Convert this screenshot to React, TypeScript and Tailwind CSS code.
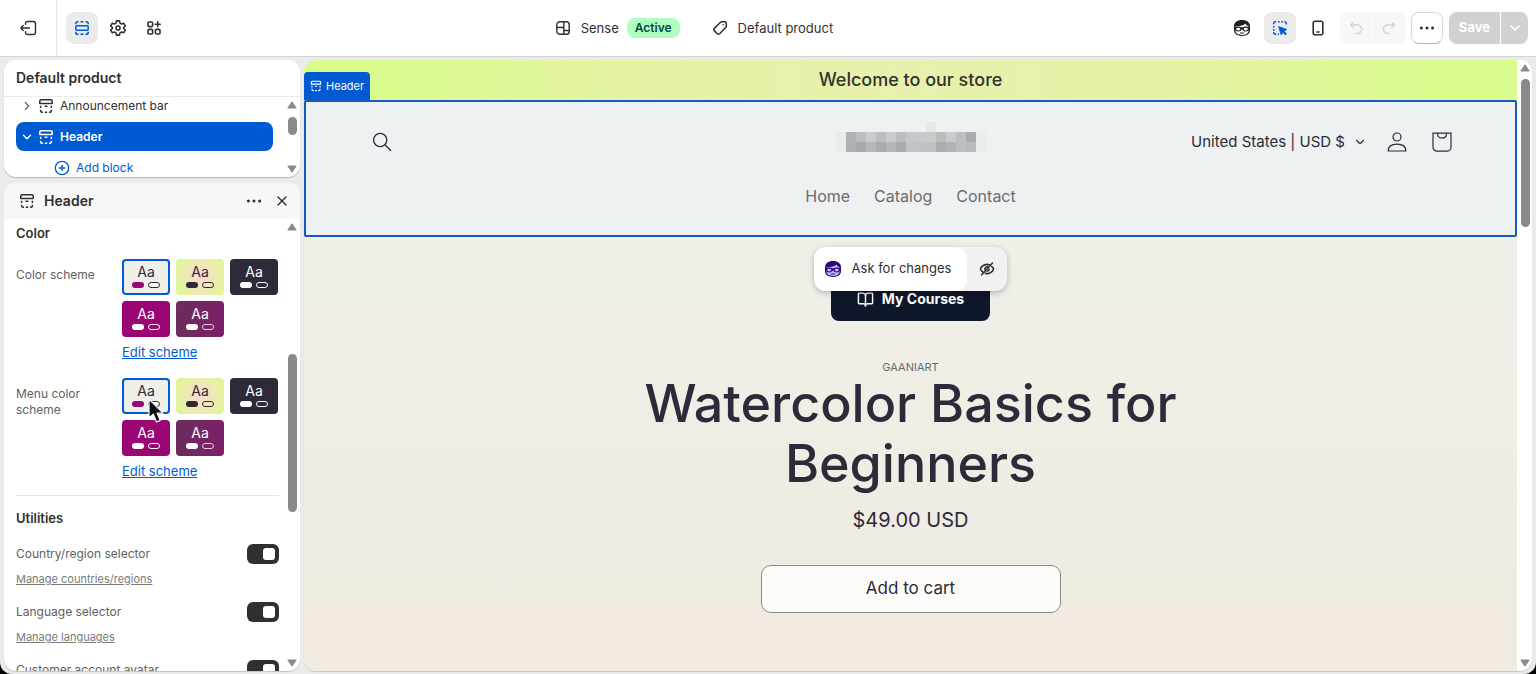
import { useState } from 'react';
import type { ReactNode } from 'react';
import { clsx } from 'clsx';
import { BookOpen, ChevronDown, ChevronRight, CirclePlus, X } from 'lucide-react';

type Scheme = { name: string; card: string; text: string; solid: string; outline: string };

const schemes: Scheme[] = [
  { name: 'Scheme 1', card: 'bg-[#f0efe9]', text: 'text-[#2e2a39]', solid: 'bg-[#9a0674]', outline: 'border-[#2e2a39] bg-white' },
  { name: 'Scheme 2', card: 'bg-[radial-gradient(circle,#fbdccf_10%,#e4f3a0_75%,#dcf58f)]', text: 'text-[#2e2a39]', solid: 'bg-[#2e2a39]', outline: 'border-[#2e2a39]' },
  { name: 'Scheme 3', card: 'bg-[#2e2a39]', text: 'text-white', solid: 'bg-white', outline: 'border-white' },
  { name: 'Scheme 4', card: 'bg-[#9a0674]', text: 'text-white', solid: 'bg-white', outline: 'border-white' },
  { name: 'Scheme 5', card: 'bg-linear-to-r from-[#6b2c5c] to-[#7d1f69]', text: 'text-white', solid: 'bg-white', outline: 'border-[#f0c8e6]' },
];

const logoRows = [
  ['', '', '', '', '', '', '', '', '', '#e3e8e9', '', '', '', '', ''],
  ['#e8ecec', '#aeb2b5', '#b9bec1', '#c8cccd', '#b9bec0', '#c8cccd', '#bac0c2', '#c5c8cb', '#c5c9cb', '#c7cbcc', '#b7bcbd', '#c9ccd4', '#babfc2', '#a7acad', '#e8ecec'],
  ['#e8ecec', '#adb1b5', '#a8a9ad', '#b4b6b9', '#a9abaf', '#b4b6b9', '#a9abaf', '#c2c3c7', '#c1c2c9', '#bfc0c4', '#abadb1', '#b1b3b7', '#bcbec4', '#b7bbbc', '#e8ecec'],
];

function SectionIcon({ className }: { className?: string }) {
  return (
    <svg viewBox="0 0 16 16" className={className} fill="none" stroke="currentColor" strokeWidth="1.5" strokeLinejoin="round" aria-hidden="true">
      <path d="M1.800 5.500V3.100c0-.8.600-1.400 1.400-1.400h9.600c.8 0 1.400.6 1.400 1.400v2.400z" />
      <path d="M2.600 7.800v2.200M13.400 7.800v2.200M2.600 11.800v.9c0 .9.600 1.500 1.500 1.500h.9M13.400 11.800v.9c0 .9-.6 1.500-1.500 1.500h-.9M6.800 14.200h2.400M6.600 8.300h2.800" />
    </svg>
  );
}

function ExitIcon() {
  return (
    <svg viewBox="0 0 18 18" className="size-[18px]" fill="none" stroke="currentColor" strokeWidth="1.4" strokeLinecap="round" strokeLinejoin="round" aria-hidden="true">
      <path d="M6.500 5.300V4.500c0-1.100.9-2 2-2h5.700c1.300 0 2.300 1 2.300 2.300v8.400c0 1.300-1 2.300-2.300 2.300H8.500c-1.100 0-2-.9-2-2v-.8M10.500 9H1.800M4.200 6.600 1.800 9l2.400 2.400" />
    </svg>
  );
}

function SectionsIcon() {
  return (
    <svg viewBox="0 0 16 16" className="size-4" fill="none" stroke="currentColor" strokeWidth="1.5" strokeLinejoin="round" aria-hidden="true">
      <rect x="1.8" y="5.8" width="12.4" height="4.4" rx="1" />
      <path d="M1.800 4.200v-.6c0-1.100.8-1.900 1.900-1.900h.8M6.500 1.700h3M11.500 1.700h.8c1.100 0 1.900.8 1.900 1.900v.6M1.800 11.800v.6c0 1.100.8 1.900 1.900 1.900h.8M6.500 14.300h3M11.500 14.300h.8c1.100 0 1.900-.8 1.900-1.900v-.6" />
    </svg>
  );
}

function GearIcon() {
  return (
    <svg viewBox="0 0 24 24" className="size-[18px]" fill="none" stroke="currentColor" strokeWidth="2.1" strokeLinejoin="round" aria-hidden="true">
      <path d="M10 2.500h4l.7 3 2.100 1.200 3-.9 2 3.400-2.300 2.100v1.400l2.300 2.100-2 3.400-3-.9-2.100 1.200-.7 3h-4l-.7-3-2.100-1.200-3 .9-2-3.400 2.300-2.100v-1.400L2.200 9.200l2-3.400 3 .9 2.100-1.200z" />
      <circle cx="12" cy="12" r="2.7" />
    </svg>
  );
}

function AppsIcon() {
  return (
    <svg viewBox="0 0 16 16" className="size-4" fill="none" stroke="currentColor" strokeWidth="1.6" strokeLinecap="round" aria-hidden="true">
      <rect x="2" y="2" width="4.6" height="4.6" rx="1" />
      <rect x="2" y="9.4" width="4.6" height="4.6" rx="1" />
      <rect x="9.4" y="9.4" width="4.6" height="4.6" rx="1" />
      <path d="M11.700 1.800v5M9.200 4.300h5" />
    </svg>
  );
}

function ThemeIcon() {
  return (
    <svg viewBox="0 0 16 16" className="size-4" fill="none" stroke="currentColor" strokeWidth="1.4" aria-hidden="true">
      <rect x="1.8" y="1.8" width="12.4" height="12.4" rx="2.8" />
      <path d="M8.800 2v12M2 7.500h6.800M8.800 10.500H14" />
    </svg>
  );
}

function TagIcon() {
  return (
    <svg viewBox="0 0 16 16" className="size-4" fill="none" stroke="currentColor" strokeWidth="1.5" strokeLinejoin="round" aria-hidden="true">
      <path d="M8.500 2.300a2 2 0 0 1 1.400-.6h2.500c1 0 1.900.8 1.900 1.900v2.500c0 .5-.2 1-.6 1.400l-5.800 6a2 2 0 0 1-2.800 0l-2.600-2.600a2 2 0 0 1 0-2.800z" />
      <circle cx="11.2" cy="4.8" r=".8" fill="currentColor" stroke="none" />
    </svg>
  );
}

function SidekickIcon({ className, face, hair }: { className?: string; face: string; hair: string }) {
  return (
    <svg viewBox="0 0 18 18" className={className} aria-hidden="true">
      <path d="M1 7.500C1 3.500 4 1 9 1s8 2.500 8 6.500v3.300C17 15 14 17 9 17s-8-2-8-6.200z" fill={hair} />
      <path d="M2.400 7.200c4 .3 7.900-.6 10.200-2.600.5 1.300 1.500 2.200 3 2.600v4c0 3-2.500 4.700-6.600 4.700s-6.600-1.700-6.600-4.700z" fill={face} />
      <path d="M1.500 8.200c2.300-.9 5-.8 7.500.2 2.500-1 5.200-1.100 7.500-.2-.1 2.900-1.400 4.300-3.700 4.300-1.900 0-2.900-.9-3.800-2.200-.9 1.300-1.900 2.200-3.800 2.200-2.300 0-3.600-1.400-3.700-4.300z" fill={hair} />
      <ellipse cx="5.2" cy="10.1" rx="2.1" ry="1.3" fill={face} />
      <ellipse cx="12.8" cy="10.1" rx="2.1" ry="1.3" fill={face} />
      <path d="M7.500 14h3" stroke={hair} strokeWidth="1.2" strokeLinecap="round" />
    </svg>
  );
}

function InspectorIcon() {
  return (
    <svg viewBox="0 0 16 16" className="size-4" fill="none" stroke="currentColor" strokeWidth="1.5" aria-hidden="true">
      <path d="M1.700 4.200v-.6c0-1.100.8-1.900 1.900-1.900h.6M6 1.700h1.700M9.300 1.700H11M12.400 1.700c1.100 0 1.900.8 1.900 1.900v.8M1.700 5.900v1.700M1.700 9.200v1.700M1.700 12.300c0 1.100.8 1.900 1.900 1.900h.8M5.800 14.200H7" />
      <path d="M6.600 6.600 15 9.500l-3.100 1.600 2.600 2.700-1.100 1.100-2.600-2.600L9.200 15z" fill="currentColor" strokeWidth=".8" strokeLinejoin="round" />
    </svg>
  );
}

function PhoneIcon() {
  return (
    <svg viewBox="0 0 16 16" className="size-4" fill="none" stroke="currentColor" strokeWidth="1.6" strokeLinecap="round" aria-hidden="true">
      <rect x="3.2" y="1.3" width="9.6" height="13.4" rx="2" />
      <path d="M7 12h2" />
    </svg>
  );
}

function TurnIcon({ flip }: { flip?: boolean }) {
  return (
    <svg viewBox="0 0 16 16" className={clsx('size-4', flip && '-scale-x-100')} fill="none" stroke="currentColor" strokeWidth="1.5" strokeLinecap="round" strokeLinejoin="round" aria-hidden="true">
      <path d="M5 2.500 2.500 5 5 7.500M2.800 5h6.700a4.200 4.200 0 0 1 0 8.400H8" />
    </svg>
  );
}

function DotsIcon() {
  return (
    <svg viewBox="0 0 16 16" className="size-4" fill="currentColor" aria-hidden="true">
      <circle cx="2.4" cy="8" r="1.5" />
      <circle cx="8" cy="8" r="1.5" />
      <circle cx="13.6" cy="8" r="1.5" />
    </svg>
  );
}

function EyeOffIcon() {
  return (
    <svg viewBox="0 0 16 16" className="size-4" fill="none" stroke="currentColor" strokeWidth="1.6" strokeLinecap="round" strokeLinejoin="round" aria-hidden="true">
      <path d="M13.500 2 2.700 13.800M4 11.200C2.400 10 1.500 8.700 1.500 8c0-1.400 2.700-4.600 6.500-4.600 1 0 1.900.2 2.700.5M12.800 5.600c1.100.9 1.700 1.900 1.700 2.400 0 1.400-2.700 4.600-6.500 4.600-.6 0-1.100-.1-1.600-.2M5.800 8.300A2.300 2.300 0 0 1 8.300 5.800M10.200 8.200a2.300 2.300 0 0 1-2 2" />
    </svg>
  );
}

function Pointer({ className }: { className?: string }) {
  return (
    <svg viewBox="0 0 16 26" className={clsx('h-[26px] w-4', className)} aria-hidden="true">
      <path d="M1 1v19l4.300-3.900L8.500 24l3.800-1.600-3.200-7.300H15z" fill="#111" stroke="#fff" strokeWidth="1.2" strokeLinejoin="round" />
    </svg>
  );
}

function Scrollbar({ thumb, className }: { thumb: string; className?: string }) {
  return (
    <div className={clsx('flex w-3 shrink-0 flex-col items-center text-[#8a8a8a]', className)} aria-hidden="true">
      <svg viewBox="0 0 10 8" className="h-2 w-[10px]">
        <path d="M5 .8 9.200 7H.8z" fill="currentColor" stroke="currentColor" strokeLinejoin="round" />
      </svg>
      <div className="flex w-full flex-1 flex-col items-center">
        <div className={clsx('w-[9px] rounded-full bg-[#8a8a8a]', thumb)} />
      </div>
      <svg viewBox="0 0 10 8" className="h-2 w-[10px]">
        <path d="M5 7.200 9.200 1H.8z" fill="currentColor" stroke="currentColor" strokeLinejoin="round" />
      </svg>
    </div>
  );
}

function IconButton({ label, active, className, children }: { label: string; active?: boolean; className?: string; children: ReactNode }) {
  return (
    <button
      type="button"
      aria-label={label}
      className={clsx('flex size-8 items-center justify-center rounded-lg', active ? 'bg-[#ebebeb] text-[#005bd3]' : 'text-[#303030]', className)}
    >
      {children}
    </button>
  );
}

function TopBar() {
  return (
    <header className="flex h-[57px] shrink-0 items-center justify-between border-b border-[#d4d4d4] bg-white">
      <div className="flex h-full items-center">
        <div className="flex h-full w-[57px] items-center justify-center border-r border-[#e6e6e6]">
          <IconButton label="Exit"><ExitIcon /></IconButton>
        </div>
        <div className="flex gap-1 pl-[9px]">
          <IconButton label="Sections" active><SectionsIcon /></IconButton>
          <IconButton label="Theme settings"><GearIcon /></IconButton>
          <IconButton label="App embeds"><AppsIcon /></IconButton>
        </div>
      </div>
      <div className="flex items-center gap-8 pr-2 text-[13px] leading-5 text-[#303030]">
        <button type="button" className="flex items-center">
          <ThemeIcon />
          <span className="ml-[10px]">Sense</span>
          <span className="ml-2 rounded-lg bg-[#affebf] px-2 text-xs leading-5 font-semibold text-[#014b40]">Active</span>
        </button>
        <button type="button" className="flex items-center gap-[10px]">
          <TagIcon />
          Default product
        </button>
      </div>
      <div className="flex items-center pr-2">
        <div className="flex gap-1.5">
          <IconButton label="Sidekick">
            <SidekickIcon className="size-[18px]" face="#fff" hair="#1f1f1f" />
          </IconButton>
          <IconButton label="Inspector" active><InspectorIcon /></IconButton>
          <IconButton label="Mobile view"><PhoneIcon /></IconButton>
        </div>
        <div className="ml-1.5 flex gap-px">
          <button type="button" disabled aria-label="Undo" className="flex size-8 items-center justify-center rounded-l-lg bg-[#f7f7f7] text-[#d4d4d4]"><TurnIcon /></button>
          <button type="button" disabled aria-label="Redo" className="flex size-8 items-center justify-center rounded-r-lg bg-[#f7f7f7] text-[#d4d4d4]"><TurnIcon flip /></button>
        </div>
        <IconButton label="More actions" className="ml-1.5 border border-[#d8d8d8] border-b-[#b5b5b5]"><DotsIcon /></IconButton>
        <div className="ml-1.5 flex gap-px">
          <button type="button" disabled className="h-8 rounded-l-lg bg-[#d1d1d1] px-[10px] text-[13px] font-bold text-white">Save</button>
          <button type="button" disabled aria-label="More save options" className="flex h-8 w-[27px] items-center justify-center rounded-r-lg bg-[#d1d1d1] text-white">
            <ChevronDown className="size-4" strokeWidth={2.5} />
          </button>
        </div>
      </div>
    </header>
  );
}

function SectionTree() {
  return (
    <section className="flex h-[117px] shrink-0 flex-col overflow-hidden rounded-xl bg-white shadow-[0_1px_1px_#b5b5b5]">
      <h2 className="border-b border-[#ebebeb] px-3 py-2 text-sm leading-5 font-semibold text-[#303030]">Default product</h2>
      <div className="flex min-h-0 flex-1">
        <div className="-mt-1.5 flex flex-1 flex-col gap-0.5 pr-[13px] pl-3 text-xs text-[#303030]">
          <button type="button" className="flex h-[29px] shrink-0 items-center">
            <ChevronRight className="ml-1 size-3.5 text-[#616161]" />
            <SectionIcon className="ml-1 size-4" />
            <span className="ml-1.5">Announcement bar</span>
          </button>
          <button type="button" className="flex h-[29px] shrink-0 items-center rounded-lg bg-[#005bd3] font-semibold text-white">
            <ChevronDown className="ml-1 size-3.5" strokeWidth={2.5} />
            <SectionIcon className="ml-1 size-4" />
            <span className="ml-1.5">Header</span>
          </button>
          <button type="button" className="flex h-[29px] shrink-0 items-center gap-1.5 pl-[38px] text-[#005bd3]">
            <CirclePlus className="size-4" />
            Add block
          </button>
        </div>
        <Scrollbar thumb="mt-2 h-[18px]" className="mr-0.5 py-1" />
      </div>
    </section>
  );
}

function SchemePicker({ label, children }: { label: string; children?: ReactNode }) {
  const [selected, setSelected] = useState(0);

  return (
    <div className="relative flex items-start" role="group" aria-label={label}>
      <p className="w-[106px] shrink-0 pt-2 pr-4 text-xs text-[#616161]">{label}</p>
      <div className="flex-1">
        <div className="flex flex-wrap gap-1.5">
          {schemes.map((scheme, i) => (
            <button
              key={scheme.name}
              type="button"
              aria-pressed={selected === i}
              onClick={() => setSelected(i)}
              className={clsx(
                'flex h-9 w-12 flex-col items-center rounded-sm pt-1',
                scheme.card,
                scheme.text,
                selected === i && 'ring-2 ring-[#005bd3] ring-inset',
              )}
            >
              <span className="text-sm leading-[18px]">Aa</span>
              <span className="mt-px flex gap-1">
                <span className={clsx('h-1.5 w-3 rounded-full', scheme.solid)} />
                <span className={clsx('h-1.5 w-3 rounded-full border', scheme.outline)} />
              </span>
            </button>
          ))}
        </div>
        <a href="#edit-scheme" className="mt-1.5 inline-block leading-[18px] text-[#005bd3] underline">Edit scheme</a>
      </div>
      {children}
    </div>
  );
}

function ToggleRow({ id, label, link }: { id: string; label: string; link?: string }) {
  return (
    <div>
      <div className="flex h-5 items-center justify-between">
        <label htmlFor={id} className="text-xs text-[#616161]">{label}</label>
        <input
          id={id}
          type="checkbox"
          role="switch"
          defaultChecked
          className="flex h-5 w-8 appearance-none items-center rounded-md bg-[#8a8a8a] px-1 before:size-3 before:rounded-[3px] before:bg-white checked:justify-end checked:bg-[#303030]"
        />
      </div>
      {link && <a href="#manage" className="mt-[7px] block text-[11px] leading-4 text-[#7a7a7a] underline">{link}</a>}
    </div>
  );
}

function SettingsPanel() {
  return (
    <section className="flex min-h-0 flex-1 flex-col overflow-hidden rounded-xl bg-white shadow-[0_1px_1px_#c4c4c4]">
      <div className="flex h-9 shrink-0 items-center bg-[#f7f7f7] px-3 text-[#303030]">
        <SectionIcon className="ml-[3px] size-4" />
        <h2 className="ml-[9px] flex-1 text-sm font-semibold">Header</h2>
        <button type="button" aria-label="Section actions" className="mr-3"><DotsIcon /></button>
        <button type="button" aria-label="Close"><X className="-mr-0.5 size-4" /></button>
      </div>
      <div className="flex min-h-0 flex-1">
        <div className="flex-1 overflow-hidden pr-[7px] pl-3 text-[13px]">
          <h3 className="mt-1 leading-5 font-semibold text-[#303030]">Color</h3>
          <div className="mt-4 flex flex-col gap-[15px]">
            <SchemePicker label="Color scheme" />
            <SchemePicker label="Menu color scheme">
              <Pointer className="absolute top-5 left-[132px]" />
            </SchemePicker>
          </div>
          <hr className="mt-3.5 border-[#e3e3e3]" />
          <h3 className="mt-3 leading-5 font-semibold text-[#303030]">Utilities</h3>
          <div className="mt-4 flex flex-col gap-[15px]">
            <ToggleRow id="country" label="Country/region selector" link="Manage countries/regions" />
            <ToggleRow id="language" label="Language selector" link="Manage languages" />
            <ToggleRow id="avatar" label="Customer account avatar" />
          </div>
        </div>
        <Scrollbar thumb="mt-[123px] h-[158px]" className="mr-0.5 py-1" />
      </div>
    </section>
  );
}

function StoreLogo() {
  return (
    <svg viewBox="0 0 150 40" className="h-10 w-[150px]" role="img" aria-label="Store logo" shapeRendering="crispEdges">
      {logoRows.map((row, y) =>
        row.map((fill, x) => fill && <rect key={`${x}-${y}`} x={x * 10} y={y * 10} width="10" height="10" fill={fill} />),
      )}
    </svg>
  );
}

function StoreHeader() {
  return (
    <div className="relative rounded-xs border-2 border-[#1259c3] bg-[#edf1f1] pb-[27px] text-[#2e2a39]">
      {/* Selected section tag */}
      <div className="absolute -top-[30px] -left-0.5 flex h-7 items-center gap-1 rounded-t-sm bg-[#005bd3] px-1.5 text-[11px] text-white">
        <SectionIcon className="size-3" />
        Header
      </div>
      <div className="grid grid-cols-[1fr_auto_1fr] items-center px-[62px] pt-5">
        <button type="button" aria-label="Search" className="justify-self-start p-1">
          <svg viewBox="0 0 20 20" className="size-5" fill="none" stroke="currentColor" strokeWidth="1.3" aria-hidden="true">
            <circle cx="8.2" cy="8" r="6.6" />
            <path d="m13 12.800 6 6" />
          </svg>
        </button>
        <StoreLogo />
        <div className="flex items-center justify-end text-[15px]">
          <button type="button" className="flex items-center gap-2">
            United States | USD $
            <ChevronDown className="size-3.5" strokeWidth={2} />
          </button>
          <button type="button" aria-label="Log in" className="ml-5">
            <svg viewBox="0 0 20 20" className="size-5" fill="none" stroke="currentColor" strokeWidth="1.2" aria-hidden="true">
              <circle cx="10" cy="5" r="4" />
              <path d="M1.200 19c0-4.300 3-6.800 8.800-6.800s8.800 2.500 8.800 6.800z" />
            </svg>
          </button>
          <button type="button" aria-label="Cart" className="ml-6">
            <svg viewBox="0 0 22 20" className="h-5 w-[22px]" fill="none" stroke="currentColor" strokeWidth="1.2" aria-hidden="true">
              <path d="M2 1.200h18v14a4 4 0 0 1-4 4H6a4 4 0 0 1-4-4zM6.500 1.200c0 3.200 1.800 5 4.500 5s4.500-1.800 4.500-5" />
            </svg>
          </button>
        </div>
      </div>
      <nav className="mt-[22px] flex justify-center gap-6 text-base text-[#6b6a72]">
        <a href="#home">Home</a>
        <a href="#catalog">Catalog</a>
        <a href="#contact">Contact</a>
      </nav>
    </div>
  );
}

function StorePreview() {
  return (
    <main className="flex min-w-0 flex-1 overflow-hidden rounded-xl bg-white shadow-[0_1px_1px_#c4c4c4]">
      <div className="min-w-0 flex-1 bg-linear-to-b from-[#eff1ec] via-[#f0eee6] to-[#f0eae0]">
        <div className="bg-[radial-gradient(circle,#e8f0ad,#e5f3a5_45%,#d9fc8c_90%)] text-center text-lg leading-10 font-medium text-[#33332f]">
          Welcome to our store
        </div>
        <StoreHeader />
        <div className="relative flex flex-col items-center text-[#2e2a39]">
          {/* Floating toolbar over the selected section */}
          <div className="absolute top-[10px] flex rounded-xl bg-[#f1f1f1] text-[13px] text-[#303030] shadow-[0_2px_6px_#00000040]">
            <button type="button" className="flex h-11 items-center gap-[10px] rounded-xl bg-white pr-4 pl-[10px]">
              <SidekickIcon className="size-[18px]" face="#c9b6ff" hair="#2b0a78" />
              Ask for changes
            </button>
            <button type="button" aria-label="Hide section" className="flex w-10 items-center justify-center"><EyeOffIcon /></button>
          </div>
          <a href="#courses" className="mt-10 flex h-11 items-center gap-2 rounded-lg bg-[#0f172a] px-[26px] text-sm font-bold text-white">
            <BookOpen className="size-[17px]" />
            My Courses
          </a>
          <p className="mt-[39px] text-[11px] leading-[14px] text-[#6b6a72]">GAANIART</p>
          <h1 className="max-w-[600px] text-center text-[52px] leading-[60px] font-medium">Watercolor Basics for Beginners</h1>
          <p className="mt-3 text-xl leading-7">$49.00 USD</p>
          <button type="button" className="mt-[31px] h-12 w-[300px] rounded-[10px] border border-[#8a8890] bg-[#fdfcf9] text-[17px]">Add to cart</button>
        </div>
      </div>
      <Scrollbar thumb="mt-[7px] h-[148px]" className="mr-px ml-0.5 py-1" />
    </main>
  );
}

export default function App() {
  return (
    <div className="h-screen bg-black font-['Inter',sans-serif]">
      <div className="flex h-full flex-col overflow-hidden rounded-b-xl bg-[#ebebeb]">
        <TopBar />
        <div className="flex min-h-0 flex-1 gap-1 px-1 py-[3px]">
          <aside className="flex w-[296px] shrink-0 flex-col gap-1.5">
            <SectionTree />
            <SettingsPanel />
          </aside>
          <StorePreview />
        </div>
      </div>
    </div>
  );
}
